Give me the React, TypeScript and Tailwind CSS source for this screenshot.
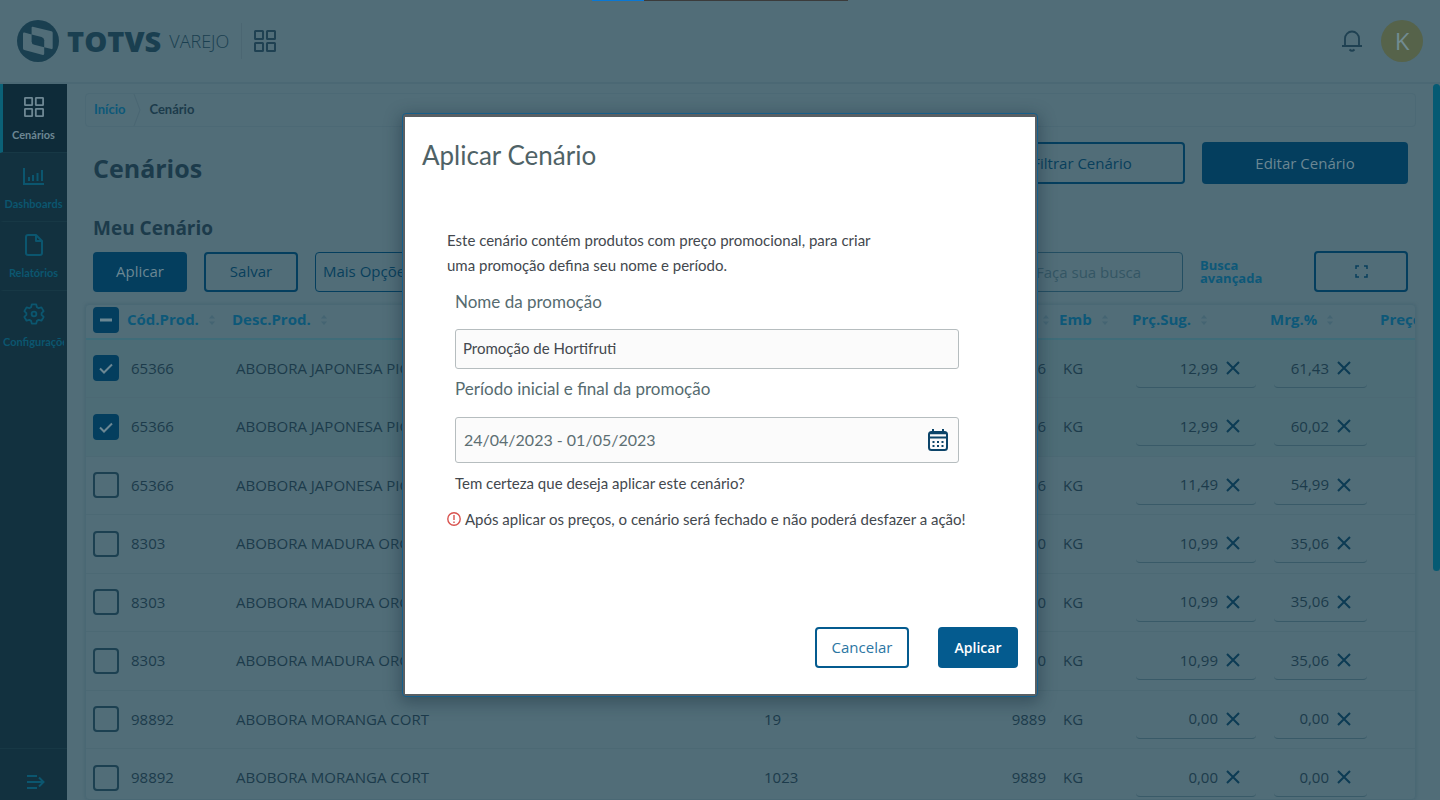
import { useState, type ReactNode } from 'react';

type Product = {
  id: number;
  code: string;
  description: string;
  stock: string;
  family: string;
  unit: string;
  price: string;
  margin: string;
};

const products: Product[] = [
  { id: 1, code: '65366', description: 'ABOBORA JAPONESA PICADA', stock: '1', family: '65366', unit: 'KG', price: '12,99', margin: '61,43' },
  { id: 2, code: '65366', description: 'ABOBORA JAPONESA PICADA', stock: '19', family: '65366', unit: 'KG', price: '12,99', margin: '60,02' },
  { id: 3, code: '65366', description: 'ABOBORA JAPONESA PICADA', stock: '1023', family: '65366', unit: 'KG', price: '11,49', margin: '54,99' },
  { id: 4, code: '8303', description: 'ABOBORA MADURA ORGANICA', stock: '1', family: '830', unit: 'KG', price: '10,99', margin: '35,06' },
  { id: 5, code: '8303', description: 'ABOBORA MADURA ORGANICA', stock: '19', family: '830', unit: 'KG', price: '10,99', margin: '35,06' },
  { id: 6, code: '8303', description: 'ABOBORA MADURA ORGANICA', stock: '1023', family: '830', unit: 'KG', price: '10,99', margin: '35,06' },
  { id: 7, code: '98892', description: 'ABOBORA MORANGA CORT', stock: '19', family: '9889', unit: 'KG', price: '0,00', margin: '0,00' },
  { id: 8, code: '98892', description: 'ABOBORA MORANGA CORT', stock: '1023', family: '9889', unit: 'KG', price: '0,00', margin: '0,00' },
];

function GridIcon({ className }: { className: string }) {
  return (
    <svg className={className} viewBox="0 0 22 22" fill="none" stroke="currentColor" strokeWidth={2}>
      <rect x="1" y="1" width="8" height="8" rx="0.5" />
      <rect x="13" y="1" width="8" height="8" rx="0.5" />
      <rect x="1" y="13" width="8" height="8" rx="0.5" />
      <rect x="13" y="13" width="8" height="8" rx="0.5" />
    </svg>
  );
}

function ChartIcon() {
  return (
    <svg className="h-5 w-[22px]" viewBox="0 0 22 20" fill="none" stroke="currentColor" strokeWidth={2}>
      <path d="M1 2v16h20" />
      <path d="M6 15v-4M10 15V9M14.500 15V7M19 15V4" />
    </svg>
  );
}

function FileIcon() {
  return (
    <svg className="h-[22px] w-[18px]" viewBox="0 0 18 22" fill="none" stroke="currentColor" strokeWidth={2} strokeLinejoin="round">
      <path d="M11 1H3a2 2 0 0 0-2 2v16a2 2 0 0 0 2 2h12a2 2 0 0 0 2-2V7z" />
      <path d="M11 1v6h6" />
    </svg>
  );
}

function GearIcon() {
  return (
    <svg className="h-[22px] w-[22px]" viewBox="0 0 24 24" fill="none" stroke="currentColor" strokeWidth={2} strokeLinejoin="round">
      <path d="M9.600 1.500h4.800l.8 3.100 1.900 1.100 3-.9 2.400 4.100-2.200 2.200v1.900l2.200 2.200-2.400 4.100-3-.9-1.900 1.100-.8 3H9.600l-.8-3-1.900-1.100-3 .9-2.400-4.100L3.700 13v-1.900L1.500 8.900l2.400-4.100 3 .9 1.900-1.100z" />
      <circle cx="12" cy="12" r="2.600" />
    </svg>
  );
}

function SortIcon() {
  return (
    <svg className="h-[10px] w-1.5 shrink-0 text-[#446472]" viewBox="0 0 6 10" fill="currentColor">
      <path d="M3 0l3 3.500H0zM3 10L0 6.500h6z" />
    </svg>
  );
}

function CloseIcon() {
  return (
    <svg className="h-[14px] w-[14px]" viewBox="0 0 14 14" fill="none" stroke="currentColor" strokeWidth={2}>
      <path d="M1 1l12 12M13 1L1 13" />
    </svg>
  );
}

function Logo() {
  return (
    <div className="flex items-center text-[#1a3f50]">
      <svg className="h-[42px] w-[42px]" viewBox="0 0 42 42">
        <circle cx="21" cy="21" r="21" fill="currentColor" />
        <path
          d="M15.800 6.700l18.700 4.600q1.200.3 1.200 1.500v15q0 1.600-1.300 1.300L27.200 27.300v6.500q0 1.400-1.300 1.100L7.300 30q-1.300-.3-1.300-1.600V13.700q0-1.300 1.300-1.100l7.300 1.900V7.700q0-1.300 1.200-1z"
          fill="#516d78"
        />
        <path d="M14.600 14.500L24.500 17q2.700.7 2.700 3.300v7L17.300 24.800q-2.700-.7-2.700-3.300z" fill="currentColor" />
      </svg>
      <span className="ml-2 text-[29px] leading-10 font-extrabold">TOTVS</span>
      <span className="ml-2 text-lg leading-10 font-light">VAREJO</span>
    </div>
  );
}

function SidebarItem({ label, active, children }: { label: string; active?: boolean; children: ReactNode }) {
  return (
    <a
      href="#"
      className={`block h-[69px] border-b border-b-[#173845] pt-3 pr-[3px] font-['Lato',sans-serif] text-[11px] font-bold whitespace-nowrap ${
        active ? 'border-l-[3px] border-l-[#0b6177] bg-[#0e2b39] text-[#6d8793]' : 'border-l-[3px] border-l-transparent text-[#0b566f]'
      }`}
    >
      <span className="flex h-[22px] items-center justify-center">{children}</span>
      <span className="mt-[9px] block overflow-hidden text-center leading-4">{label}</span>
    </a>
  );
}

function HeaderCell({ label }: { label: string }) {
  return (
    <th className="p-0 pb-1 text-left font-bold">
      <div className="flex items-center gap-2.5">
        {label}
        <SortIcon />
      </div>
    </th>
  );
}

function ValueField({ label, value, className }: { label: string; value: string; className: string }) {
  return (
    <div className={`ml-1 flex h-[39px] items-center rounded border-b border-[#395a68] ${className}`}>
      <input aria-label={label} defaultValue={value} className="w-full min-w-0 bg-transparent text-right outline-none" />
      <button type="button" aria-label={`Limpar ${label}`} className="ml-2 shrink-0 text-[#0c3b54]">
        <CloseIcon />
      </button>
    </div>
  );
}

function Checkbox({ label, checked, mixed, onChange }: { label: string; checked: boolean; mixed?: boolean; onChange: () => void }) {
  return (
    <label className="relative ml-[7px] block h-[26px] w-[26px]">
      <input
        type="checkbox"
        aria-label={label}
        checked={checked}
        onChange={onChange}
        className="block h-[26px] w-[26px] appearance-none rounded border-2 border-[#1c4051] checked:border-[#043e5e] checked:bg-[#043e5e]"
      />
      {checked && (
        <svg className="pointer-events-none absolute inset-0 text-[#6b8793]" viewBox="0 0 26 26" fill="none" stroke="currentColor">
          <path d={mixed ? 'M7 13h12' : 'M7 13.500l4 4 8-8'} strokeWidth={mixed ? 3 : 2} />
        </svg>
      )}
    </label>
  );
}

export default function App() {
  const [selected, setSelected] = useState<number[]>([1, 2]);
  const [name, setName] = useState('Promoção de Hortifruti');
  const [period, setPeriod] = useState('24/04/2023 - 01/05/2023');
  const [open, setOpen] = useState(true);

  const toggle = (id: number) => {
    setSelected(selected.includes(id) ? selected.filter(s => s !== id) : [...selected, id]);
  };

  const toggleAll = () => {
    setSelected(selected.length > 0 ? [] : products.map(p => p.id));
  };

  return (
    <div className="relative flex h-screen flex-col overflow-hidden bg-[#516d78] font-['Open_Sans',sans-serif] text-[15px] text-[#1c3b4b]">
      <div className="absolute inset-x-0 top-0 flex h-px justify-center">
        <div className="w-[52px] bg-[#0a78d4]" />
        <div className="w-[204px] bg-[#3b3b3b]" />
      </div>

      {/* Top bar */}
      <header className="flex h-[84px] shrink-0 items-center border-b-2 border-[#4b6874] px-[17px]">
        <Logo />
        <div className="mx-3 h-9 w-px bg-[#4b6672]" />
        <button type="button" aria-label="Aplicativos" className="text-[#1f4152]">
          <GridIcon className="h-[22px] w-[22px]" />
        </button>
        <button type="button" aria-label="Notificações" className="ml-auto text-[#1f4152]">
          <svg className="h-[22px] w-[22px]" viewBox="0 0 22 22" fill="none" stroke="currentColor" strokeWidth={1.800}>
            <path d="M1 16h20M4 16V8.500a7 7 0 0 1 14 0V16" />
            <path d="M8.500 19.500q2.500 2.500 5 0" />
          </svg>
        </button>
        <div className="ml-[18px] flex h-[42px] w-[42px] items-center justify-center rounded-full bg-[#56634a] text-2xl text-[#718b91]">K</div>
      </header>

      <div className="flex min-h-0 flex-1">
        <nav className="flex w-[67px] shrink-0 flex-col bg-[#12313f]">
          <SidebarItem label="Cenários" active>
            <GridIcon className="h-5 w-5" />
          </SidebarItem>
          <SidebarItem label="Dashboards">
            <ChartIcon />
          </SidebarItem>
          <SidebarItem label="Relatórios">
            <FileIcon />
          </SidebarItem>
          <div className="[&>a]:border-b-0">
            <SidebarItem label="Configurações">
              <GearIcon />
            </SidebarItem>
          </div>
          <button type="button" aria-label="Expandir menu" className="mt-auto flex h-[52px] items-end justify-center border-t border-[#173845] pb-2.5 pl-1 text-[#0b566f]">
            <svg className="h-4 w-[18px]" viewBox="0 0 18 16" fill="none" stroke="currentColor" strokeWidth={2}>
              <path d="M0 2h10M0 8h16M0 14h10M12 3.500l4.500 4.500-4.500 4.500" />
            </svg>
          </button>
        </nav>

        <main className="flex min-w-0 flex-1 flex-col overflow-hidden pr-[17px] pl-[18px]">
          <nav className="mt-[9px] flex h-[34px] shrink-0 items-center rounded border border-[#4c6975] pl-2 font-['Lato',sans-serif] text-[13px]">
            <a href="#" className="font-bold text-[#0d5878]">
              Início
            </a>
            <svg className="mx-2 h-8 w-2" viewBox="0 0 8 32" fill="none" stroke="#4a6673">
              <path d="M1 0l6 16-6 16" />
            </svg>
            <span className="font-bold">Cenário</span>
          </nav>

          <div className="mt-[15px] flex shrink-0 items-start gap-[17px] px-2">
            <h1 className="mt-2.5 mr-auto text-[25px] leading-8 font-bold">Cenários</h1>
            <button type="button" className="h-[42px] w-[206px] rounded border-2 border-[#043e5e] text-[#083f5c]">
              Filtrar Cenário
            </button>
            <button type="button" className="h-[42px] w-[206px] rounded bg-[#043e5e] text-[#6b8793]">
              Editar Cenário
            </button>
          </div>

          <h2 className="mt-[31px] shrink-0 pl-2 text-[19px] leading-[26px] font-bold">Meu Cenário</h2>

          <div className="mt-2.5 flex shrink-0 items-center gap-[17px] px-2">
            <button type="button" className="h-10 w-[94px] rounded bg-[#043e5e] text-[#6b8793]">
              Aplicar
            </button>
            <button type="button" className="h-10 w-[94px] rounded border-2 border-[#043e5e] text-[#083f5c]">
              Salvar
            </button>
            <select aria-label="Mais Opções" className="h-10 w-[160px] appearance-none rounded border border-[#043e5e] px-[7px] text-[#083f5c]">
              <option>Mais Opções</option>
            </select>
            <input
              type="search"
              aria-label="Faça sua busca"
              placeholder="Faça sua busca"
              className="ml-auto h-10 w-[160px] rounded border border-[#234e62] px-3 placeholder:text-[#345664]"
            />
            <a href="#" className="w-[97px] pr-6 text-[13px] leading-[13px] font-bold text-[#0d5878]">
              Busca avançada
            </a>
            <button type="button" aria-label="Tela cheia" className="flex h-[41px] w-[94px] items-center justify-center rounded border-2 border-[#043e5e] text-[#083f5c]">
              <svg className="h-[13px] w-[13px]" viewBox="0 0 13 13" fill="none" stroke="currentColor" strokeWidth={1.500}>
                <path d="M1 4V1h3M9 1h3v3M12 9v3H9M4 12H1V9" />
              </svg>
            </button>
          </div>

          {/* Products */}
          <div className="mt-3 min-h-0 flex-1 overflow-hidden rounded border border-[#4a6874] shadow-[0_0_3px_#456370]">
            <table className="w-full table-fixed border-collapse whitespace-nowrap">
              <colgroup>
                <col className="w-[41px]" />
                <col className="w-[105px]" />
                <col />
                <col className="w-[150px]" />
                <col className="w-[149px]" />
                <col className="w-[73px]" />
                <col className="w-[138px]" />
                <col className="w-[110px]" />
                <col className="w-[35px]" />
              </colgroup>
              <thead>
                <tr className="h-[34px] border-b-2 border-[#3f6c79] text-[#0d5878]">
                  <th className="p-0 pb-1">
                    <Checkbox label="Selecionar todos" checked={selected.length > 0} mixed={selected.length < products.length} onChange={toggleAll} />
                  </th>
                  <HeaderCell label="Cód.Prod." />
                  <HeaderCell label="Desc.Prod." />
                  <HeaderCell label="Loja" />
                  <th className="p-0 pr-2.5 pb-1 font-bold">
                    <div className="flex items-center justify-end gap-2.5">
                      Família
                      <SortIcon />
                    </div>
                  </th>
                  <HeaderCell label="Emb" />
                  <HeaderCell label="Prç.Sug." />
                  <HeaderCell label="Mrg.%" />
                  <th className="overflow-hidden p-0 pb-1 text-left font-bold">Preço</th>
                </tr>
              </thead>
              <tbody>
                {products.map(product => (
                  <tr
                    key={product.id}
                    className={`h-[58px] border-b border-[#4c6974] even:h-[59px] ${selected.includes(product.id) ? 'bg-[#4d6c76]' : ''}`}
                  >
                    <td className="p-0">
                      <Checkbox label={`Selecionar ${product.code}`} checked={selected.includes(product.id)} onChange={() => toggle(product.id)} />
                    </td>
                    <td className="p-0 pl-1">{product.code}</td>
                    <td className="overflow-hidden p-0 pl-1">{product.description}</td>
                    <td className="p-0 pl-1">{product.stock}</td>
                    <td className="p-0 pr-[13px] text-right">{product.family}</td>
                    <td className="p-0 pl-1">{product.unit}</td>
                    <td className="p-0">
                      <ValueField label="Prç.Sug." value={product.price} className="w-[120px] pr-4" />
                    </td>
                    <td className="p-0">
                      <ValueField label="Mrg.%" value={product.margin} className="w-[93px] pr-4" />
                    </td>
                    <td className="p-0" />
                  </tr>
                ))}
              </tbody>
            </table>
          </div>
        </main>

        <div className="w-[7px] shrink-0">
          <div className="h-[68%] rounded-full bg-[#055a73]" />
        </div>
      </div>

      {open && (
        <div className="fixed inset-0 flex items-center justify-center pt-2.5">
          <div
            role="dialog"
            aria-modal="true"
            aria-labelledby="dialog-title"
            className="w-[636px] max-w-full rounded border border-[#155f8c] bg-[#595f63] p-0.5 pt-[3px] shadow-[0_4px_16px_2px_rgba(20,40,55,0.4)]"
          >
            <form
              className="bg-white px-[17px] pt-[22px] pb-[26px] font-['Lato',sans-serif] text-[#43484e]"
              onSubmit={e => {
                e.preventDefault();
                setOpen(false);
              }}
            >
              <h2 id="dialog-title" className="text-[26px] leading-8 text-[#4f6266]">
                Aplicar Cenário
              </h2>
              <div className="mt-[57px] px-[25px]">
                <p className="w-[440px] max-w-full text-[15px] leading-[25px]">
                  Este cenário contém produtos com preço promocional, para criar uma promoção defina seu nome e período.
                </p>
                <div className="mt-3 px-2 pr-[34px]">
                  <label htmlFor="name" className="block text-[17px] leading-6 text-[#566b70]">
                    Nome da promoção
                  </label>
                  <input
                    id="name"
                    value={name}
                    onChange={e => setName(e.target.value)}
                    className="mt-[15px] block h-10 w-full rounded-[3px] border border-[#b6bdbf] bg-[#fbfbfb] px-[7px] pb-0.5 text-[15px]"
                  />
                  <label htmlFor="period" className="mt-2 block text-[17px] leading-6 text-[#566b70]">
                    Período inicial e final da promoção
                  </label>
                  <div className="mt-4 flex h-[46px] items-center rounded-[3px] border border-[#b6bdbf] bg-[#fbfbfb] pr-2.5 pl-2">
                    <input
                      id="period"
                      value={period}
                      onChange={e => setPeriod(e.target.value)}
                      className="min-w-0 flex-1 bg-transparent text-base text-[#5d6f73] outline-none"
                    />
                    <button type="button" aria-label="Abrir calendário" className="text-[#0c4469]">
                      <svg className="h-[22px] w-5" viewBox="0 0 20 22" fill="none" stroke="currentColor" strokeWidth={2}>
                        <rect x="1" y="3" width="18" height="18" rx="2.500" />
                        <path d="M1 4.500h18" strokeWidth={1.500} />
                        <path d="M1 8.500h18M5 0v4M15 0v4" />
                        <path d="M4.500 13h2M9 13h2M13.500 13h2M4.500 17h2M9 17h2M13.500 17h2" />
                      </svg>
                    </button>
                  </div>
                  <p className="mt-2 text-[15px] leading-6">Tem certeza que deseja aplicar este cenário?</p>
                </div>
                <p className="mt-3 flex items-center gap-1 text-[15px] leading-6 whitespace-nowrap">
                  <svg className="h-[14px] w-[14px] shrink-0 text-[#d9534f]" viewBox="0 0 14 14" fill="none" stroke="currentColor" strokeWidth={1.400}>
                    <circle cx="7" cy="7" r="6.200" />
                    <path d="M7 3v5M7 9.500V11" />
                  </svg>
                  Após aplicar os preços, o cenário será fechado e não poderá desfazer a ação!
                </p>
              </div>
              <div className="mt-24 flex justify-end gap-[29px] font-['Open_Sans',sans-serif] text-[15px]">
                <button type="button" onClick={() => setOpen(false)} className="h-[41px] w-[94px] rounded border-2 border-[#045b8f] text-[#2b76a3]">
                  Cancelar
                </button>
                <button type="submit" className="h-[41px] w-20 rounded bg-[#045b8f] text-sm font-semibold text-white">
                  Aplicar
                </button>
              </div>
            </form>
          </div>
        </div>
      )}
    </div>
  );
}
